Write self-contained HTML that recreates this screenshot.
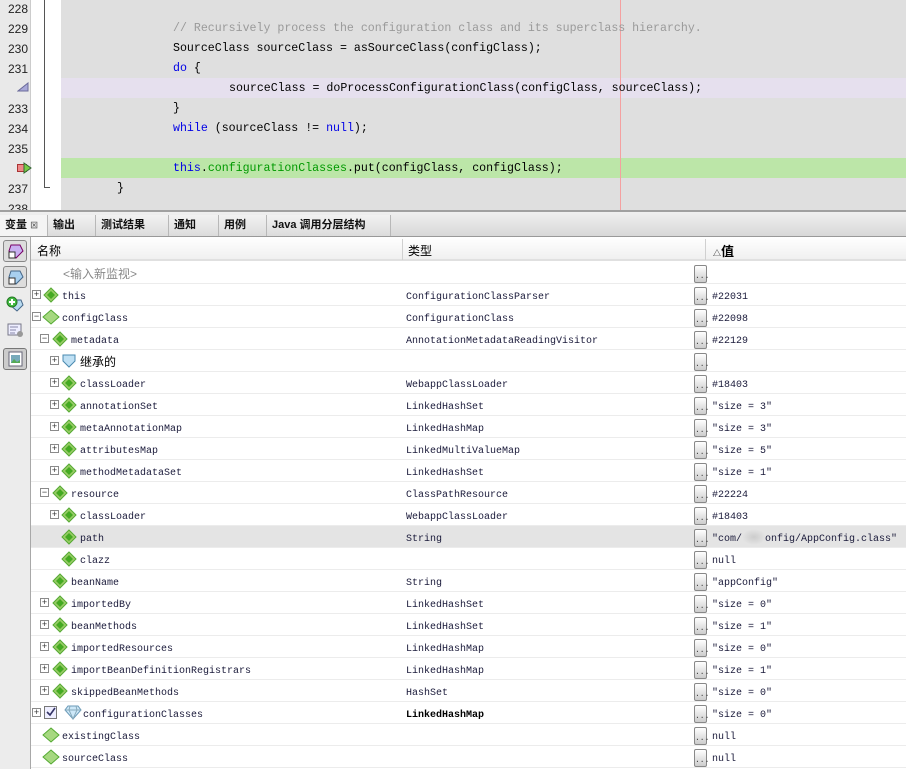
<!DOCTYPE html>
<html><head><meta charset="utf-8">
<style>
*{margin:0;padding:0;box-sizing:border-box}
body{width:906px;height:769px;overflow:hidden;background:#fff;position:relative;font-family:"Liberation Mono","Noto Sans CJK SC",monospace}
.abs{position:absolute}
.code{font-size:11.6px;line-height:20px;white-space:pre;color:#000}
.ln{position:absolute;left:0;width:28px;text-align:right;font-family:"Liberation Sans",sans-serif;font-size:12px;color:#222;line-height:20px}
.kw{color:#0000e6}
.cm{color:#9a9a9a}
.fd{color:#009900}
.tab{position:absolute;top:215px;height:21px;border-right:1px solid #b8b8b8;background:linear-gradient(#f2f2f2,#dcdcdc);font-family:"Liberation Sans","Noto Sans CJK SC",sans-serif;font-size:11px;font-weight:bold;line-height:21px;padding-left:5px;color:#111}
.row{position:absolute;left:31px;width:875px;height:22px;border-bottom:1px solid #ececec;font-size:10px;line-height:22px;color:#1a1a3a}
.row span{position:absolute;top:3px;white-space:nowrap}
.exp{position:absolute;top:6px;width:9px;height:9px;border:1px solid #8a8a8a;background:#fff;font-size:9px;line-height:7px;text-align:center;color:#333;font-family:"Liberation Sans",sans-serif}
.btn{position:absolute;left:663px;top:3px;width:13px;height:18px;border:1px solid #888;border-radius:2px;background:linear-gradient(#fff,#ccc);font-size:8px;line-height:22px;text-align:center;color:#333}
.dia{position:absolute;top:3px}
.hd{font-family:"Liberation Sans","Noto Sans CJK SC",sans-serif;font-size:12px}
</style></head><body>
<div class="abs" style="left:0;top:0;width:31px;height:211px;background:#e9e9e9;border-right:1px solid #ccc"></div>
<div class="abs" style="left:31px;top:0;width:30px;height:211px;background:#fff"></div>
<div class="abs" style="left:61px;top:0;width:845px;height:211px;background:#dfdfdf"></div>
<div class="abs" style="left:61px;top:78px;width:845px;height:20px;background:#e6e0ee"></div>
<div class="abs" style="left:61px;top:158px;width:845px;height:20px;background:#bce6a8"></div>
<div class="abs" style="left:620px;top:0;width:1px;height:211px;background:#f4a0a0"></div>
<div class="abs" style="left:44px;top:0;width:1px;height:188px;background:#555"></div>
<div class="abs" style="left:44px;top:187px;width:6px;height:1px;background:#555"></div>
<div class="ln" style="top:-1px">228</div>
<div class="ln" style="top:19px">229</div>
<div class="ln" style="top:39px">230</div>
<div class="ln" style="top:59px">231</div>
<svg class="abs" style="left:17px;top:82px" width="12" height="10"><polygon points="1,9 11,9 11,1" fill="#a8a8d8" stroke="#6a6a9a"/></svg>
<div class="ln" style="top:99px">233</div>
<div class="ln" style="top:119px">234</div>
<div class="ln" style="top:139px">235</div>
<svg class="abs" style="left:17px;top:162px" width="15" height="12"><rect x="0.5" y="2.5" width="9" height="7" fill="#e88" stroke="#a33"/><polygon points="7,1 14,6 7,11" fill="#7c4" stroke="#363"/></svg>
<div class="ln" style="top:179px">237</div>
<div class="ln" style="top:199px">238</div>
<div class="abs code cm" style="left:173px;top:19px">// Recursively process the configuration class and its superclass hierarchy.</div>
<div class="abs code" style="left:173px;top:39px">SourceClass sourceClass = asSourceClass(configClass);</div>
<div class="abs code" style="left:173px;top:59px"><span class="kw">do</span> {</div>
<div class="abs code" style="left:229px;top:79px">sourceClass = doProcessConfigurationClass(configClass, sourceClass);</div>
<div class="abs code" style="left:173px;top:99px">}</div>
<div class="abs code" style="left:173px;top:119px"><span class="kw">while</span> (sourceClass != <span class="kw">null</span>);</div>
<div class="abs code" style="left:173px;top:159px"><span class="kw">this</span>.<span class="fd">configurationClasses</span>.put(configClass, configClass);</div>
<div class="abs code" style="left:117px;top:179px">}</div>
<div class="abs" style="left:0;top:210px;width:906px;height:2px;background:#a0a0a0"></div>
<div class="abs" style="left:0;top:212px;width:906px;height:25px;background:linear-gradient(#f0f0f0,#d8d8d8);border-bottom:1px solid #999"></div>
<div class="tab" style="left:0;width:48px;background:#f4f4f4">变量 <span style="font-size:8px;color:#666">⊠</span></div>
<div class="tab" style="left:48px;width:48px">输出</div>
<div class="tab" style="left:96px;width:73px">测试结果</div>
<div class="tab" style="left:169px;width:50px">通知</div>
<div class="tab" style="left:219px;width:48px">用例</div>
<div class="tab" style="left:267px;width:124px">Java 调用分层结构</div>
<div class="abs" style="left:0;top:237px;width:31px;height:532px;background:#ececec;border-right:1px solid #a8a8a8"></div>
<div class="abs" style="left:3px;top:240px;width:24px;height:22px;border:1px solid #888;border-radius:3px;background:#ddd"></div>
<div class="abs" style="left:3px;top:266px;width:24px;height:22px;border:1px solid #888;border-radius:3px;background:#ddd"></div>
<svg class="abs" style="left:7px;top:243px" width="17" height="16"><polygon points="4,2 13,2 16,8 9,15 2,8" fill="#c8b0f0" stroke="#706"/><rect x="2" y="9" width="6" height="6" fill="#fff" stroke="#333"/></svg>
<svg class="abs" style="left:7px;top:269px" width="17" height="16"><polygon points="4,2 13,2 16,8 9,15 2,8" fill="#a8d0f0" stroke="#468"/><rect x="2" y="9" width="6" height="6" fill="#fff" stroke="#333"/></svg>
<svg class="abs" style="left:6px;top:296px" width="18" height="16"><polygon points="6,4 15,4 17,9 11,15 4,9" fill="#b8daf0" stroke="#468"/><circle cx="6" cy="6" r="5" fill="#4b4" stroke="#272"/><path d="M6 3v6M3 6h6" stroke="#fff" stroke-width="2"/></svg>
<svg class="abs" style="left:7px;top:322px" width="18" height="16"><rect x="1" y="2" width="13" height="11" fill="#eef" stroke="#778"/><path d="M3 5h8M3 8h6M3 11h5" stroke="#88a"/><circle cx="13" cy="12" r="3" fill="#999"/></svg>
<div class="abs" style="left:3px;top:348px;width:24px;height:22px;border:1px solid #777;border-radius:3px;background:#ccc"></div>
<svg class="abs" style="left:8px;top:351px" width="15" height="16"><rect x="1" y="1" width="13" height="14" fill="#fff" stroke="#667"/><rect x="3" y="4" width="9" height="8" fill="#7ab"/><path d="M3 12l3-4 3 3 3-2v3z" fill="#5a5"/></svg>
<div class="abs" style="left:31px;top:237px;width:875px;height:24px;background:linear-gradient(#fff,#f0f0f0);border-bottom:2px solid #e0e0e0"></div>
<div class="abs" style="left:402px;top:239px;width:1px;height:21px;background:#d0d0d0"></div>
<div class="abs" style="left:705px;top:239px;width:1px;height:21px;background:#d0d0d0"></div>
<div class="abs hd" style="left:37px;top:242px">名称</div>
<div class="abs hd" style="left:408px;top:242px">类型</div>
<div class="abs hd" style="left:713px;top:241px;font-weight:bold;font-size:13px"><span style="font-size:8px;font-weight:normal">△</span>值</div>
<div class="row" style="top:262px"><span class="hd" style="left:32px;color:#888;font-size:12px;top:1px">&lt;输入新监视&gt;</span><div class="btn">...</div></div>

<div class="row" style="top:284px"><div class="exp" style="left:1px">+</div><svg class="dia" style="left:12px" width="16" height="16"><polygon points="8,1 15,8 8,15 1,8" fill="#9c6" stroke="#5a3"/><polygon points="8,4 12,8 8,12 4,8" fill="#4a2"/></svg><span style="left:31px">this</span><span style="left:375px">ConfigurationClassParser</span><div class="btn">...</div><span style="left:681px">#22031</span></div>

<div class="row" style="top:306px"><div class="exp" style="left:1px">−</div><svg class="dia" style="left:11px" width="18" height="16"><polygon points="9,1 17,8 9,15 1,8" fill="#a6d880" stroke="#5a3"/></svg><span style="left:31px">configClass</span><span style="left:375px">ConfigurationClass</span><div class="btn">...</div><span style="left:681px">#22098</span></div>

<div class="row" style="top:328px"><div class="exp" style="left:9px">−</div><svg class="dia" style="left:21px" width="16" height="16"><polygon points="8,1 15,8 8,15 1,8" fill="#9c6" stroke="#5a3"/><polygon points="8,4 12,8 8,12 4,8" fill="#4a2"/></svg><span style="left:40px">metadata</span><span style="left:375px">AnnotationMetadataReadingVisitor</span><div class="btn">...</div><span style="left:681px">#22129</span></div>

<div class="row" style="top:350px"><div class="exp" style="left:19px">+</div><svg class="dia" style="left:31px" width="14" height="16"><path d="M1 2h12v6l-6 6-6-6z" fill="#bfe0f4" stroke="#4a8ab0"/></svg><span class="hd" style="left:49px;color:#000;top:1px">继承的</span><div class="btn">...</div></div>

<div class="row" style="top:372px"><div class="exp" style="left:19px">+</div><svg class="dia" style="left:30px" width="16" height="16"><polygon points="8,1 15,8 8,15 1,8" fill="#9c6" stroke="#5a3"/><polygon points="8,4 12,8 8,12 4,8" fill="#4a2"/></svg><span style="left:49px">classLoader</span><span style="left:375px">WebappClassLoader</span><div class="btn">...</div><span style="left:681px">#18403</span></div>

<div class="row" style="top:394px"><div class="exp" style="left:19px">+</div><svg class="dia" style="left:30px" width="16" height="16"><polygon points="8,1 15,8 8,15 1,8" fill="#9c6" stroke="#5a3"/><polygon points="8,4 12,8 8,12 4,8" fill="#4a2"/></svg><span style="left:49px">annotationSet</span><span style="left:375px">LinkedHashSet</span><div class="btn">...</div><span style="left:681px">"size = 3"</span></div>

<div class="row" style="top:416px"><div class="exp" style="left:19px">+</div><svg class="dia" style="left:30px" width="16" height="16"><polygon points="8,1 15,8 8,15 1,8" fill="#9c6" stroke="#5a3"/><polygon points="8,4 12,8 8,12 4,8" fill="#4a2"/></svg><span style="left:49px">metaAnnotationMap</span><span style="left:375px">LinkedHashMap</span><div class="btn">...</div><span style="left:681px">"size = 3"</span></div>

<div class="row" style="top:438px"><div class="exp" style="left:19px">+</div><svg class="dia" style="left:30px" width="16" height="16"><polygon points="8,1 15,8 8,15 1,8" fill="#9c6" stroke="#5a3"/><polygon points="8,4 12,8 8,12 4,8" fill="#4a2"/></svg><span style="left:49px">attributesMap</span><span style="left:375px">LinkedMultiValueMap</span><div class="btn">...</div><span style="left:681px">"size = 5"</span></div>

<div class="row" style="top:460px"><div class="exp" style="left:19px">+</div><svg class="dia" style="left:30px" width="16" height="16"><polygon points="8,1 15,8 8,15 1,8" fill="#9c6" stroke="#5a3"/><polygon points="8,4 12,8 8,12 4,8" fill="#4a2"/></svg><span style="left:49px">methodMetadataSet</span><span style="left:375px">LinkedHashSet</span><div class="btn">...</div><span style="left:681px">"size = 1"</span></div>

<div class="row" style="top:482px"><div class="exp" style="left:9px">−</div><svg class="dia" style="left:21px" width="16" height="16"><polygon points="8,1 15,8 8,15 1,8" fill="#9c6" stroke="#5a3"/><polygon points="8,4 12,8 8,12 4,8" fill="#4a2"/></svg><span style="left:40px">resource</span><span style="left:375px">ClassPathResource</span><div class="btn">...</div><span style="left:681px">#22224</span></div>

<div class="row" style="top:504px"><div class="exp" style="left:19px">+</div><svg class="dia" style="left:30px" width="16" height="16"><polygon points="8,1 15,8 8,15 1,8" fill="#9c6" stroke="#5a3"/><polygon points="8,4 12,8 8,12 4,8" fill="#4a2"/></svg><span style="left:49px">classLoader</span><span style="left:375px">WebappClassLoader</span><div class="btn">...</div><span style="left:681px">#18403</span></div>

<div class="row" style="top:526px;background:#e4e4e4"><svg class="dia" style="left:30px" width="16" height="16"><polygon points="8,1 15,8 8,15 1,8" fill="#9c6" stroke="#5a3"/><polygon points="8,4 12,8 8,12 4,8" fill="#4a2"/></svg><span style="left:49px">path</span><span style="left:375px">String</span><div class="btn">...</div><span style="left:681px">"com/</span><div class="abs" style="left:711px;top:3px;width:24px;height:16px;background:radial-gradient(#ccc,#e4e4e4 70%)"></div><span style="left:734px">onfig/AppConfig.class"</span></div>

<div class="row" style="top:548px"><svg class="dia" style="left:30px" width="16" height="16"><polygon points="8,1 15,8 8,15 1,8" fill="#9c6" stroke="#5a3"/><polygon points="8,4 12,8 8,12 4,8" fill="#4a2"/></svg><span style="left:49px">clazz</span><div class="btn">...</div><span style="left:681px">null</span></div>

<div class="row" style="top:570px"><svg class="dia" style="left:21px" width="16" height="16"><polygon points="8,1 15,8 8,15 1,8" fill="#9c6" stroke="#5a3"/><polygon points="8,4 12,8 8,12 4,8" fill="#4a2"/></svg><span style="left:40px">beanName</span><span style="left:375px">String</span><div class="btn">...</div><span style="left:681px">"appConfig"</span></div>

<div class="row" style="top:592px"><div class="exp" style="left:9px">+</div><svg class="dia" style="left:21px" width="16" height="16"><polygon points="8,1 15,8 8,15 1,8" fill="#9c6" stroke="#5a3"/><polygon points="8,4 12,8 8,12 4,8" fill="#4a2"/></svg><span style="left:40px">importedBy</span><span style="left:375px">LinkedHashSet</span><div class="btn">...</div><span style="left:681px">"size = 0"</span></div>

<div class="row" style="top:614px"><div class="exp" style="left:9px">+</div><svg class="dia" style="left:21px" width="16" height="16"><polygon points="8,1 15,8 8,15 1,8" fill="#9c6" stroke="#5a3"/><polygon points="8,4 12,8 8,12 4,8" fill="#4a2"/></svg><span style="left:40px">beanMethods</span><span style="left:375px">LinkedHashSet</span><div class="btn">...</div><span style="left:681px">"size = 1"</span></div>

<div class="row" style="top:636px"><div class="exp" style="left:9px">+</div><svg class="dia" style="left:21px" width="16" height="16"><polygon points="8,1 15,8 8,15 1,8" fill="#9c6" stroke="#5a3"/><polygon points="8,4 12,8 8,12 4,8" fill="#4a2"/></svg><span style="left:40px">importedResources</span><span style="left:375px">LinkedHashMap</span><div class="btn">...</div><span style="left:681px">"size = 0"</span></div>

<div class="row" style="top:658px"><div class="exp" style="left:9px">+</div><svg class="dia" style="left:21px" width="16" height="16"><polygon points="8,1 15,8 8,15 1,8" fill="#9c6" stroke="#5a3"/><polygon points="8,4 12,8 8,12 4,8" fill="#4a2"/></svg><span style="left:40px">importBeanDefinitionRegistrars</span><span style="left:375px">LinkedHashMap</span><div class="btn">...</div><span style="left:681px">"size = 1"</span></div>

<div class="row" style="top:680px"><div class="exp" style="left:9px">+</div><svg class="dia" style="left:21px" width="16" height="16"><polygon points="8,1 15,8 8,15 1,8" fill="#9c6" stroke="#5a3"/><polygon points="8,4 12,8 8,12 4,8" fill="#4a2"/></svg><span style="left:40px">skippedBeanMethods</span><span style="left:375px">HashSet</span><div class="btn">...</div><span style="left:681px">"size = 0"</span></div>

<div class="row" style="top:702px"><div class="exp" style="left:1px">+</div><svg class="dia" style="left:13px;top:4px" width="14" height="14"><rect x="0.5" y="0.5" width="12" height="12" fill="#eef" stroke="#777"/><path d="M3 6l3 3 5-7" stroke="#336" stroke-width="1.6" fill="none"/></svg><svg class="dia" style="left:33px;top:3px" width="18" height="15"><polygon points="4,1 14,1 17,5 9,14 1,5" fill="#cde8f8" stroke="#6a9ab8"/><path d="M1 5h16M6 1l-1 4 4 9 4-9-1-4" stroke="#8ab" fill="none"/></svg><span style="left:52px">configurationClasses</span><span style="left:375px;font-weight:bold;color:#000">LinkedHashMap</span><div class="btn">...</div><span style="left:681px">"size = 0"</span></div>

<div class="row" style="top:724px"><svg class="dia" style="left:11px" width="18" height="16"><polygon points="9,1 17,8 9,15 1,8" fill="#a6d880" stroke="#5a3"/></svg><span style="left:31px">existingClass</span><div class="btn">...</div><span style="left:681px">null</span></div>

<div class="row" style="top:746px"><svg class="dia" style="left:11px" width="18" height="16"><polygon points="9,1 17,8 9,15 1,8" fill="#a6d880" stroke="#5a3"/></svg><span style="left:31px">sourceClass</span><div class="btn">...</div><span style="left:681px">null</span></div>
</body></html>
